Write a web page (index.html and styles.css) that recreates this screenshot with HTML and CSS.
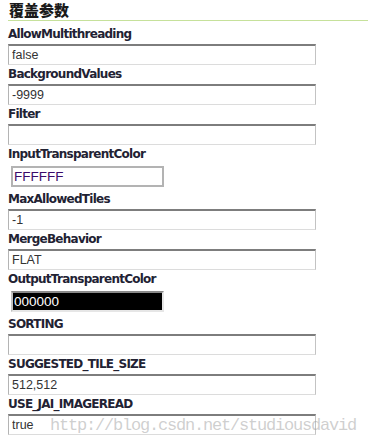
FILE: index.html
```html
<!DOCTYPE html>
<html lang="zh-CN">
<head>
  <meta charset="UTF-8">
  <title>覆盖参数</title>
  <link rel="stylesheet" href="styles.css">
</head>
<body>
  <h3 class="title">覆盖参数</h3>
  <div class="params">
    <label>AllowMultithreading</label>
    <input type="text" class="field" value="false">
    <label>BackgroundValues</label>
    <input type="text" class="field" value="-9999">
    <label>Filter</label>
    <input type="text" class="field" value="">
    <label>InputTransparentColor</label>
    <input type="text" class="field color" value="FFFFFF">
    <label>MaxAllowedTiles</label>
    <input type="text" class="field" value="-1">
    <label>MergeBehavior</label>
    <input type="text" class="field" value="FLAT">
    <label>OutputTransparentColor</label>
    <input type="text" class="field color dark" value="000000">
    <label>SORTING</label>
    <input type="text" class="field" value="">
    <label>SUGGESTED_TILE_SIZE</label>
    <input type="text" class="field" value="512,512">
    <label>USE_JAI_IMAGEREAD</label>
    <input type="text" class="field" value="true">
  </div>
  <div class="watermark">http://blog.csdn.net/studiousdavid</div>
</body>
</html>
```

FILE: styles.css
```css
body { margin: 0; padding: 0 0 0 8px; background: #fff; position: relative; overflow: hidden; height: 446px; }
.title {
  margin: 0 0 4px 0;
  padding-left: 1px;
  height: 20px;
  line-height: 20px;
  font-family: "Noto Sans CJK SC", sans-serif;
  font-size: 15px;
  font-weight: 900;
  color: #1a1a1a;
  border-bottom: 1px solid #c6e19b;
}
.params label {
  display: block;
  height: 19px;
  line-height: 19px;
  font-family: "DejaVu Sans", sans-serif;
  font-size: 12px;
  font-weight: bold;
  color: #222233;
  letter-spacing: -0.75px;
}
.params .field {
  display: block;
  box-sizing: border-box;
  width: 308px;
  height: 21px;
  margin: 0;
  padding: 0 3px;
  font-family: "Liberation Sans", sans-serif;
  font-size: 12.5px;
  color: #333;
  background: #fff;
  border-style: solid;
  border-width: 2px 1px 1px 1px;
  border-color: #7d7d7d #c3c3c3 #dcdcdc #b4b4b4;
  outline: none;
}
.params .color {
  width: 153px;
  margin: 2px 0 3px 3px;
  border: 2px solid #b3b3b3;
  font-size: 13.5px;
  color: #3a0a6a;
  padding: 0 1px;
}
.params .dark {
  background: #000;
  color: #fff;
  border-color: #8a8a8a #e6e6e6 #e6e6e6 #c0c0c0;
}
.watermark {
  position: absolute;
  left: 50px;
  top: 416px;
  font-family: "Liberation Mono", monospace;
  font-size: 17px;
  letter-spacing: -1.2px;
  color: rgba(160, 160, 160, 0.5);
  pointer-events: none;
  white-space: nowrap;
}
```
